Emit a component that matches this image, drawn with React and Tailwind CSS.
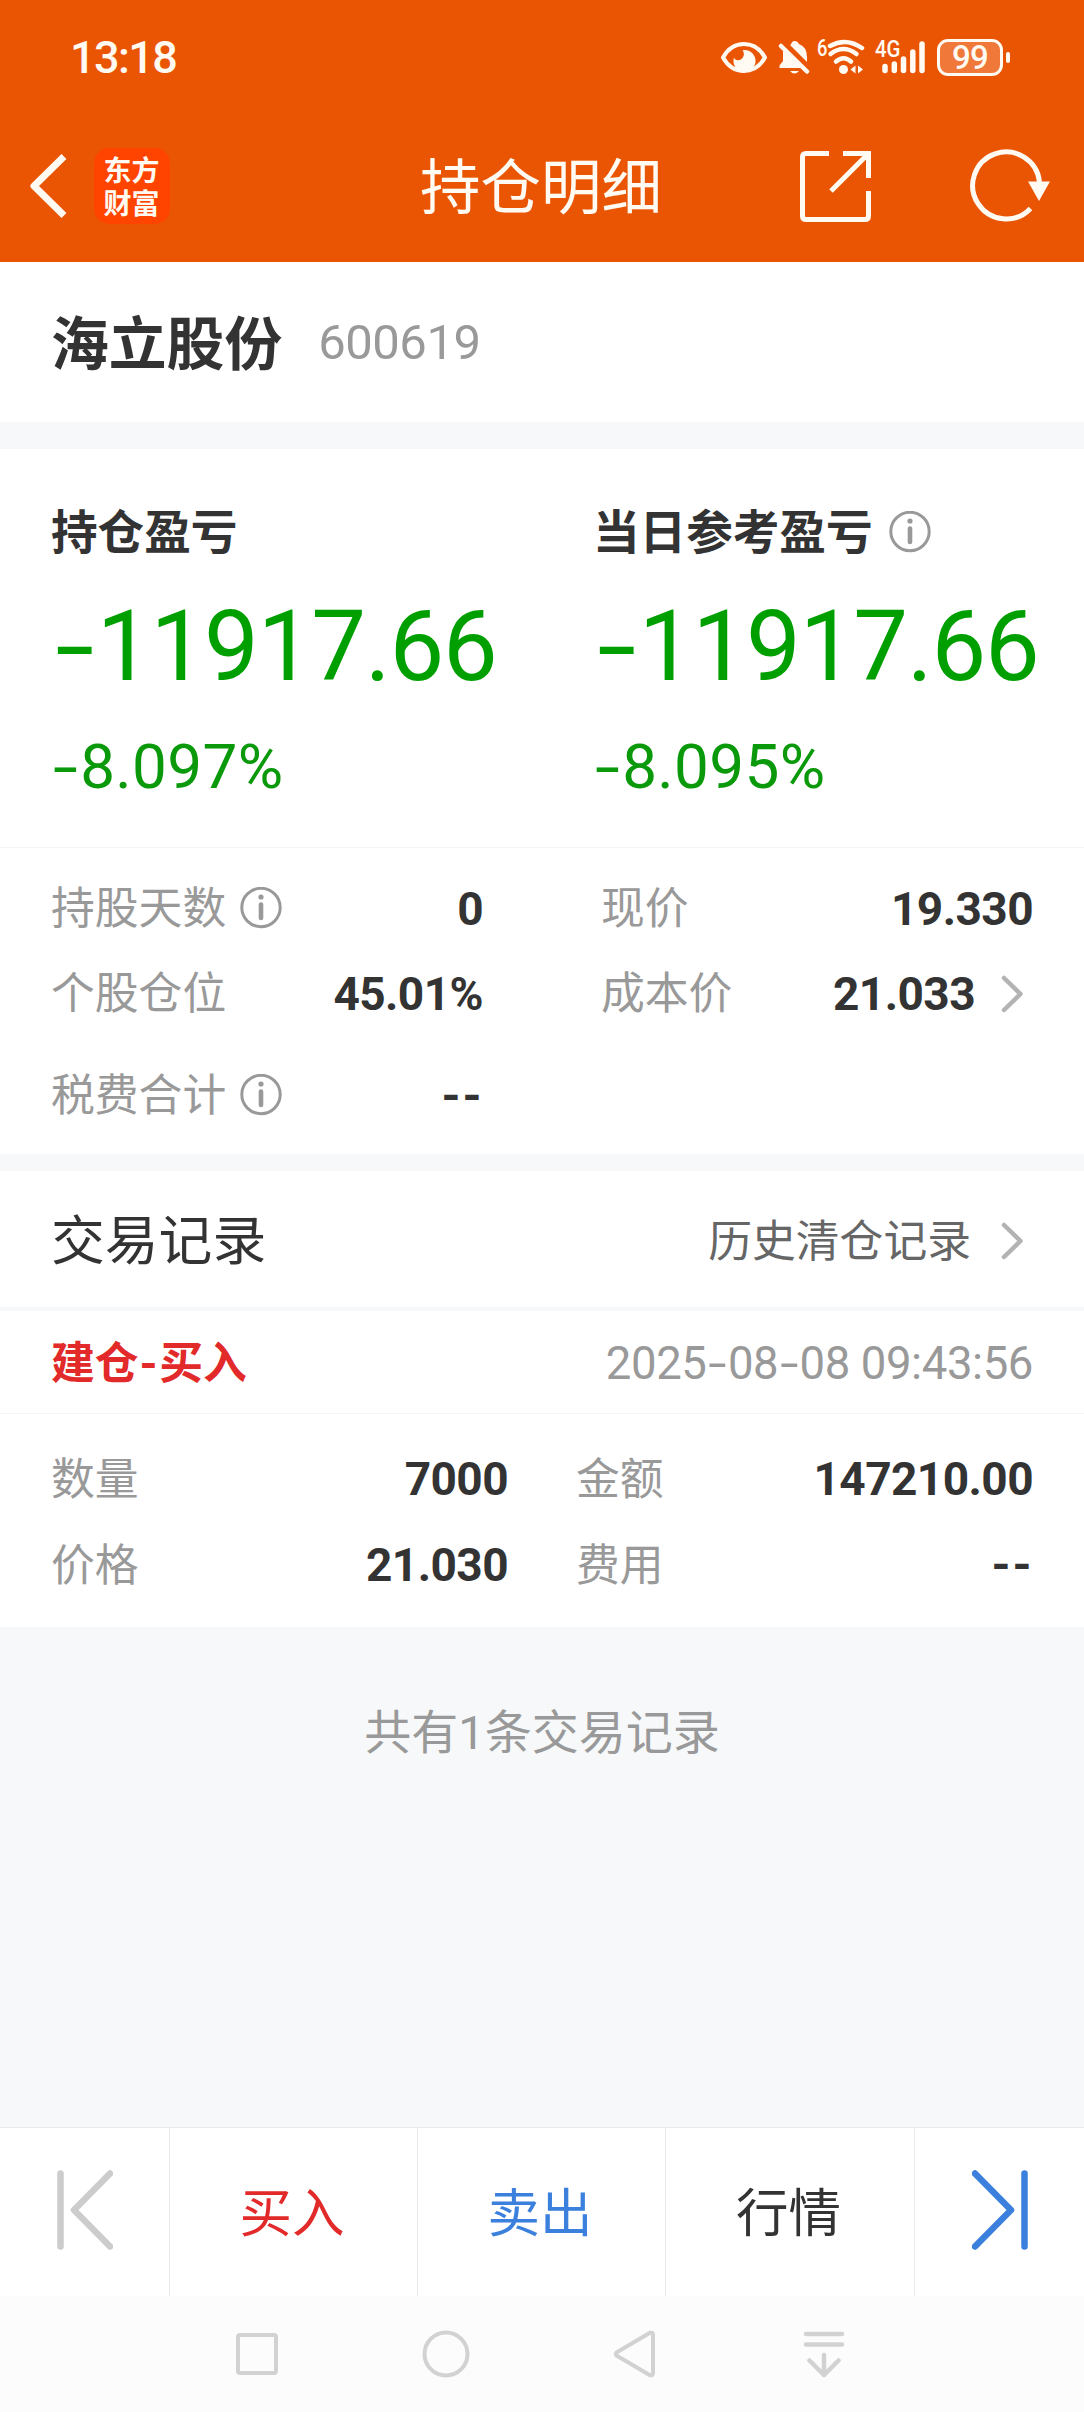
import React from 'react';

const summary = [
  { label: '持仓盈亏', amount: '-11917.66', percent: '-8.097%' },
  { label: '当日参考盈亏', amount: '-11917.66', percent: '-8.095%', info: true },
];

const actions = [
  { label: '买入', className: 'w-[248px] text-[#e22a2a]' },
  { label: '卖出', className: 'w-[248px] text-[#3b80dc]' },
  { label: '行情', className: 'w-[249px] text-[#333333]' },
];

// Roboto's hyphen is short, so it is stretched to the width of the figures
const Num = ({ children, bold }) =>
  children.split(/(-)/).map((part, i) =>
    part === '-' ? (
      <span key={i} className="inline-block w-[0.47em] text-center">
        <span className={`inline-block ${bold ? 'scale-x-[1.05]' : 'scale-x-[1.45]'}`}>-</span>
      </span>
    ) : (
      part
    )
  );

const InfoIcon = () => (
  <svg className="h-[42px] w-[42px] shrink-0" viewBox="0 0 42 42" fill="none" stroke="#999999">
    <circle cx="21" cy="20.5" r="19.2" strokeWidth="3" />
    <circle cx="21" cy="10" r="2.6" fill="#999999" stroke="none" />
    <path d="M21 17.500v13.500" strokeWidth="4.6" strokeLinecap="round" />
  </svg>
);

const Chevron = () => (
  <svg className="h-10 w-6 shrink-0" viewBox="0 0 24 40" fill="none" stroke="#b3b3b3" strokeWidth="4.5" strokeLinecap="round" strokeLinejoin="round">
    <path d="M3 4l16.500 16L3 36" />
  </svg>
);

const StatusBar = () => (
  <div className="flex h-[110px] items-center justify-between pt-1 pr-[74px] pl-[70px]">
    <span className="text-[45px] font-medium tracking-[-0.035em]">13:18</span>
    <div className="flex items-center">
      <svg className="h-9 w-12" viewBox="0 0 48 36" fill="none">
        <path d="M3 18.500C13 0.500 35 0.500 45 18.500C35 36.500 13 36.500 3 18.500Z" stroke="currentColor" strokeWidth="4" strokeLinejoin="round" />
        <circle cx="24.500" cy="22" r="11" fill="currentColor" />
        <path d="M13 12Q18 9 22 10Q25.500 15 22.500 19Q19 23 14.500 20Z" fill="#ea5504" />
      </svg>
      <svg className="ml-[10px] h-9 w-8" viewBox="0 0 32 36" fill="currentColor">
        <path d="M13 5.500Q14 1.500 17 2q2.500 0 4 3 8 3 8 13v5L12 6Z" />
        <path d="M6 10L25 29H1.500v-2.500L5 22V13Z" />
        <path d="M12 32h9q-4.500 5-9 0Z" />
        <path d="M5 5.500L30 30.500" stroke="#ea5504" strokeWidth="5" />
        <path d="M3 7L29 32.500" stroke="currentColor" strokeWidth="4.500" strokeLinecap="round" />
      </svg>
      <span className="ml-[7px] w-[10px] self-start text-[23px] leading-[20px] font-medium">
        <span className="inline-block origin-left scale-x-[0.8]">6</span>
      </span>
      <svg className="h-9 w-[38px]" viewBox="0 0 38 36" fill="none" stroke="currentColor" strokeWidth="4.500" strokeLinecap="round">
        <path d="M3 7Q19 -2 35 9" />
        <path d="M3.500 15Q16.500 5 29.500 15" />
        <path d="M9 22.500Q16.500 16 24 22.500" />
        <circle cx="16.500" cy="30.500" r="4.500" fill="currentColor" stroke="none" />
        <path d="M28.500 26.500v8l-5-4ZM31 26.500l5 4-5 4Z" fill="currentColor" stroke="none" />
      </svg>
      <div className="relative ml-[10px] h-9 w-[50px]">
        <span className="absolute -top-px left-0 origin-left scale-x-[0.85] text-[24px] leading-[22px] font-medium">4G</span>
        <svg className="h-9 w-[50px]" viewBox="0 0 50 36" stroke="currentColor" strokeWidth="5.500" strokeLinecap="round">
          <path d="M10 27.500v4M19.300 25v6.500M28.500 20v11.500M37.800 13v18.500M47 5v26.500" />
        </svg>
      </div>
      <div className="ml-3 flex h-[37px] w-[66px] items-center justify-center rounded-[11px] border-[3px] border-current bg-[#f07838] text-[33px] font-medium tracking-tight">99</div>
      <span className="ml-[3px] h-[11px] w-1 rounded-sm bg-current" />
    </div>
  </div>
);

const Header = () => (
  <div className="flex h-[152px] items-center">
    <svg className="ml-[28px] h-[66px] w-[42px]" viewBox="0 0 42 66" fill="none" stroke="currentColor" strokeWidth="7">
      <path d="M36 3.500L6 33l30 29.500" strokeLinejoin="round" />
    </svg>
    <div className="ml-6 flex h-[76px] w-[76px] items-center justify-center rounded-[15px] bg-[#ff4400] font-['Noto_Sans_CJK_SC',sans-serif] text-[28px] leading-[33px] font-bold">
      <span className="w-[57px]">东方财富</span>
    </div>
    <h1 className="ml-[250px] w-[244px] pt-[7px] text-[60.5px] leading-none whitespace-nowrap">持仓明细</h1>
    <svg className="ml-[136px] h-[71px] w-[71px]" viewBox="0 0 71 71" fill="none" stroke="currentColor" strokeWidth="5">
      <path d="M29 2.500H6Q2.500 2.500 2.500 6v59q0 3.500 3.500 3.500h59q3.500 0 3.500-3.500V40M43 2.500h25.500V27M68 3L31 40" />
    </svg>
    <svg className="ml-[98px] h-[74px] w-[84px]" viewBox="0 0 84 74" fill="none" stroke="currentColor" strokeWidth="5">
      <path d="M70.500 33A33.500 33.500 0 1 0 61.500 59.500" />
      <path d="M59 32.500h22L70 52Z" fill="currentColor" stroke="none" />
    </svg>
  </div>
);

const Field = ({ label, value, info, arrow, className }) => (
  <div className={`flex items-center justify-between ${className}`}>
    <div className="flex items-center gap-[14px] text-[43.8px] leading-none text-[#999999]">
      <span className="pt-[3px]">{label}</span>
      {info && <InfoIcon />}
    </div>
    <div className="flex items-center">
      <span className="text-[46px] leading-none font-bold tracking-[-0.012em]">
        <Num bold>{value}</Num>
      </span>
      {arrow && (
        <span className="mr-2 ml-[26px] flex">
          <Chevron />
        </span>
      )}
    </div>
  </div>
);

const App = () => {
  return (
    <div className="flex h-[2412px] w-[1084px] flex-col overflow-hidden bg-[#f6f8fa] font-['Roboto','Noto_Sans_CJK_SC',sans-serif] leading-none text-[#333333]">
      <header className="h-[262px] bg-[#ea5504] text-[#fffaf2]">
        <StatusBar />
        <Header />
      </header>

      <section className="flex h-40 items-center bg-white pl-[51px]">
        <h2 className="pt-[7px] text-[57.8px] font-bold">海立股份</h2>
        <span className="ml-9 pt-px text-[49px] tracking-[-0.01em] text-[#999999]">600619</span>
      </section>

      <section className="mt-[27px] grid h-[398px] grid-cols-2 bg-white">
        {summary.map((item) => (
          <div key={item.label} className="pl-[51px]">
            <div className="mt-[62px] flex h-[42px] items-center gap-4 text-[46.6px] font-bold">
              <span className="pt-[3px]">{item.label}</span>
              {item.info && <InfoIcon />}
            </div>
            <div className="mt-[45px] h-[98px] text-[97.5px] leading-[98px] tracking-[-0.012em] text-[#009f00]">
              <Num>{item.amount}</Num>
            </div>
            <div className="mt-10 h-[62px] text-[62px] leading-[62px] tracking-[0.006em] text-[#0a990a]">
              <Num>{item.percent}</Num>
            </div>
          </div>
        ))}
      </section>

      <section className="flex h-[307px] border-t border-[#f4f4f4] bg-white pt-[18px]">
        <div className="ml-[51px] w-[432px]">
          <Field className="h-[85px]" label="持股天数" value="0" info />
          <Field className="h-[85px]" label="个股仓位" value="45.01%" />
          <Field className="mt-[17px] h-[85px]" label="税费合计" value="--" info />
        </div>
        <div className="ml-[118px] w-[432px]">
          <Field className="h-[85px]" label="现价" value="19.330" />
          <Field className="h-[85px]" label="成本价" value="21.033" arrow />
        </div>
      </section>

      <section className="mt-[17px] flex h-[136px] items-center justify-between bg-white pt-[5px] pr-[59px] pl-[51px]">
        <h3 className="text-[53.8px]">交易记录</h3>
        <div className="flex items-center gap-[30px] text-[43.8px] text-[#666666]">
          <span className="pt-[3px]">历史清仓记录</span>
          <Chevron />
        </div>
      </section>

      <section className="mt-1 h-[316px] bg-white">
        <div className="flex h-[103px] items-center justify-between border-b border-[#f4f4f4] pt-[3px] pr-[51px] pl-[51px]">
          <span className="pt-[2px] text-[43.8px] font-bold text-[#e22a2a]">
            <Num bold>建仓-买入</Num>
          </span>
          <span className="text-[45.5px] tracking-[-0.009em] text-[#999999]">
            <Num>2025-08-08 09:43:56</Num>
          </span>
        </div>
        <div className="flex pt-[22px]">
          <div className="ml-[51px] w-[457px]">
            <Field className="h-[86px]" label="数量" value="7000" />
            <Field className="h-[86px]" label="价格" value="21.030" />
          </div>
          <div className="ml-[68px] w-[457px]">
            <Field className="h-[86px]" label="金额" value="147210.00" />
            <Field className="h-[86px]" label="费用" value="--" />
          </div>
        </div>
      </section>

      <p className="mt-[82px] text-center text-[47px] text-[#999999]">共有1条交易记录</p>

      <div className="mt-auto flex h-[169px] border-t border-[#ebebeb] bg-white text-[52.5px]">
        <button className="flex w-[169px] items-center justify-center pb-1">
          <svg className="h-20 w-14" viewBox="0 0 56 80" fill="none" stroke="#cccccc" strokeWidth="6.5" strokeLinecap="round" strokeLinejoin="round">
            <path d="M3.500 3.500v73M53 3.500L17 40l36 36.500" />
          </svg>
        </button>
        {actions.map((action) => (
          <button key={action.label} className={`border-l border-[#ebebeb] pt-[5px] pr-[3px] ${action.className}`}>
            {action.label}
          </button>
        ))}
        <button className="flex w-[170px] items-center justify-center border-l border-[#ebebeb] pb-1">
          <svg className="h-20 w-14" viewBox="0 0 56 80" fill="none" stroke="#3b80dc" strokeWidth="6.5" strokeLinecap="round" strokeLinejoin="round">
            <path d="M52.500 3.500v73M3 3.500L39 40 3 76.500" />
          </svg>
        </button>
      </div>

      <nav className="flex h-[116px] items-center bg-[#fcfcfc] pl-[233px]">
        <svg className="h-12 w-12" viewBox="0 0 48 48" fill="none" stroke="#d2d2d2" strokeWidth="4">
          <rect x="5" y="5" width="38" height="38" rx="2" />
        </svg>
        <svg className="ml-[141px] h-12 w-12" viewBox="0 0 48 48" fill="none" stroke="#d2d2d2" strokeWidth="4">
          <circle cx="24" cy="24" r="21.500" />
        </svg>
        <svg className="ml-[141px] h-12 w-12" viewBox="0 0 48 48" fill="none" stroke="#d2d2d2" strokeWidth="4" strokeLinejoin="round">
          <path d="M5.500 22.500L39 2.800Q42 2 42 5v38q0 3-3 2.200L5.500 25.500q-1.500-1.500 0-3Z" />
        </svg>
        <svg className="ml-[141px] h-12 w-12" viewBox="0 0 48 48" fill="none" stroke="#d2d2d2" strokeWidth="4.5" strokeLinecap="round" strokeLinejoin="round">
          <path d="M6 4h36M6 14.500h36M24 25v20M9.500 30.500L24 45l14.500-14.500" />
        </svg>
      </nav>
    </div>
  );
};

export default App;
